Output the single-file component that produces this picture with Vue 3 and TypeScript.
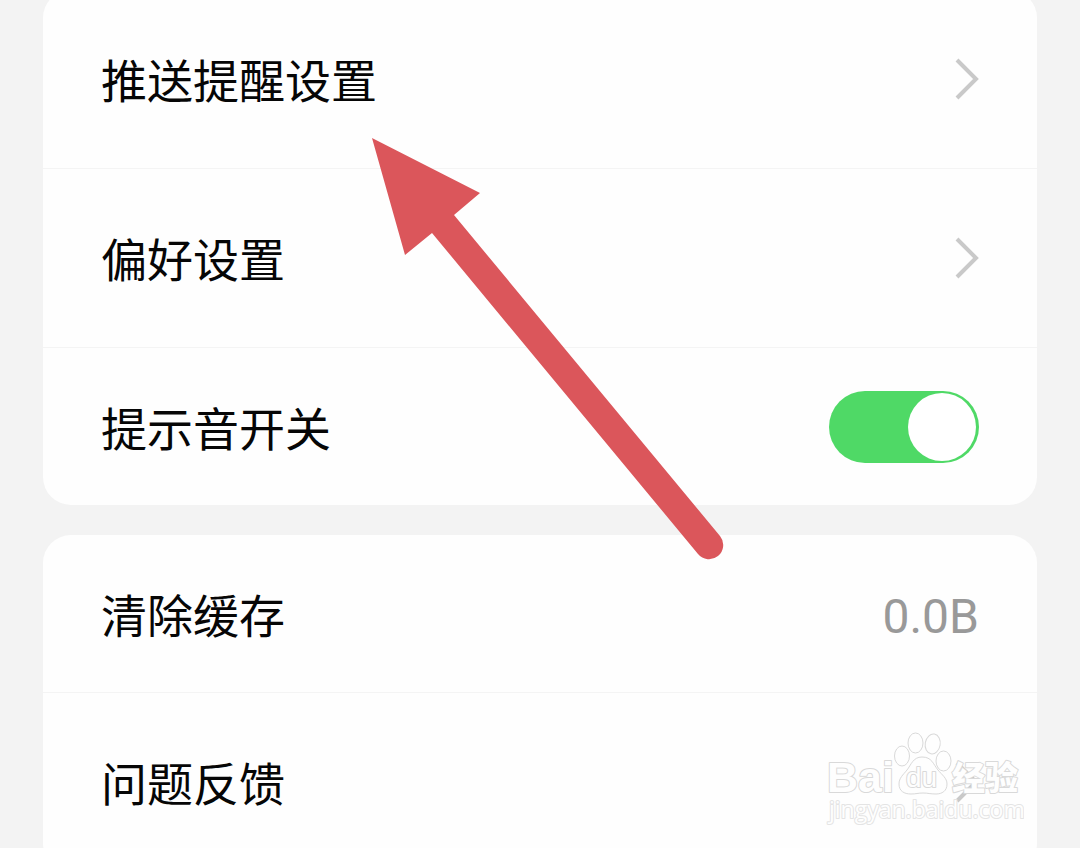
<script setup lang="ts">
import { ref } from 'vue'

interface Row {
  id: string
  label: string
  kind: 'link' | 'switch' | 'value'
  value?: string
}

const groups: Row[][] = [
  [
    { id: 'push', label: '推送提醒设置', kind: 'link' },
    { id: 'preference', label: '偏好设置', kind: 'link' },
    { id: 'sound', label: '提示音开关', kind: 'switch' },
  ],
  [
    { id: 'cache', label: '清除缓存', kind: 'value', value: '0.0B' },
    { id: 'feedback', label: '问题反馈', kind: 'link' },
  ],
]

const soundOn = ref(true)
</script>

<template>
  <main class="page">
    <section v-for="(group, g) in groups" :key="g" class="card">
      <div v-for="row in group" :key="row.id" class="item">
        <label v-if="row.kind === 'switch'" class="row" :for="row.id">
          <span class="text">{{ row.label }}</span>
          <input :id="row.id" v-model="soundOn" class="switch" type="checkbox" role="switch" />
        </label>
        <button v-else type="button" class="row" :class="{ tall: row.kind === 'link' }">
          <span class="text">{{ row.label }}</span>
          <span v-if="row.kind === 'value'" class="text value">{{ row.value }}</span>
          <svg v-else class="chevron" viewBox="0 0 24 42" aria-hidden="true">
            <path d="M2 2 L21 21 L2 40" />
          </svg>
        </button>
      </div>
    </section>

    <svg class="arrow" viewBox="0 0 352 422" aria-hidden="true">
      <path d="M0 0 L108 55 L82 77 L348 398 A14 14 0 0 1 326 416 L60 95 L33 117 Z" />
    </svg>

    <svg class="watermark" viewBox="0 0 204 104" aria-hidden="true">
      <text class="brand" x="7" y="67">Bai</text>
      <ellipse cx="82" cy="31" rx="7.5" ry="10" />
      <ellipse cx="95.5" cy="18" rx="7.5" ry="10" />
      <ellipse cx="112.7" cy="19" rx="7.5" ry="10" transform="rotate(10 113 19)" />
      <ellipse cx="123.5" cy="36" rx="7.5" ry="10" />
      <path
        d="M102 32 C93 32 91 40 87 45 C83 50 79 53 79 59 C79 66 84 69 91 69 C96 69 98 68 103 68 C108 68 110 69 116 69 C122 69 127 66 127 59 C127 53 122 50 118 45 C113 39 112 32 102 32 Z"
      />
      <text class="du" x="86" y="62">du</text>
      <text class="cjk" x="132" y="65">经验</text>
      <text class="site" x="9" y="93">jingyan.baidu.com</text>
    </svg>
  </main>
</template>

<style>
body {
  margin: 0;
  background: #f3f3f3;
}
</style>

<style scoped>
.page {
  position: relative;
  display: flex;
  flex-direction: column;
  gap: 30px;
  height: 100vh;
  overflow: hidden;
  box-sizing: border-box;
  padding: 0 43px;
  background: #f3f3f3;
  font-family: Roboto, "Noto Sans CJK SC", sans-serif;
}

.card {
  flex: none;
  overflow: hidden;
  border-radius: 28px;
  background: #fefefe;
}

/* The list is scrolled slightly past the top of its first group. */
.card:first-child {
  margin-top: -10px;
}

.item + .item {
  border-top: 1px solid #f4f4f4;
}

.row {
  display: flex;
  align-items: center;
  justify-content: space-between;
  box-sizing: border-box;
  width: 100%;
  min-height: 157px;
  margin: 0;
  padding: 0 58px;
  border: 0;
  background: none;
  color: #060606;
  font: inherit;
  text-align: left;
  cursor: pointer;
}

.row.tall {
  min-height: 178px;
}

.text {
  padding-top: 6px;
  font-size: 46px;
  line-height: 60px;
}

.value {
  color: #999;
  font-size: 48px;
}

.chevron {
  width: 24px;
  height: 42px;
  fill: none;
  stroke: #c9c9c9;
  stroke-width: 4;
}

.switch {
  appearance: none;
  display: flex;
  justify-content: flex-start;
  box-sizing: border-box;
  width: 150px;
  height: 72px;
  margin: 0;
  padding: 2px 3px;
  border-radius: 36px;
  background: #d8d8d8;
  cursor: pointer;
}

.switch::before {
  content: "";
  width: 68px;
  height: 68px;
  border-radius: 50%;
  background: #fff;
}

.switch:checked {
  justify-content: flex-end;
  background: #4fd966;
}

.arrow {
  position: absolute;
  top: 138px;
  left: 372px;
  width: 352px;
  height: 422px;
  fill: #db565b;
  pointer-events: none;
}

.watermark {
  position: absolute;
  right: 56px;
  bottom: 19px;
  width: 204px;
  height: 104px;
  fill: #fefefe;
  stroke: #d9d9d9;
  stroke-width: 1;
  pointer-events: none;
}

.watermark text {
  paint-order: stroke;
  stroke-width: 2;
  stroke-linejoin: round;
}

.brand {
  font: 700 43px "Liberation Sans", sans-serif;
}

.du {
  font: 400 28px "Liberation Sans", sans-serif;
}

.cjk {
  font: 900 33px "Noto Sans CJK SC", sans-serif;
}

.site {
  font: 400 23px "Open Sans", sans-serif;
  stroke: #e4e4e4;
}
</style>
